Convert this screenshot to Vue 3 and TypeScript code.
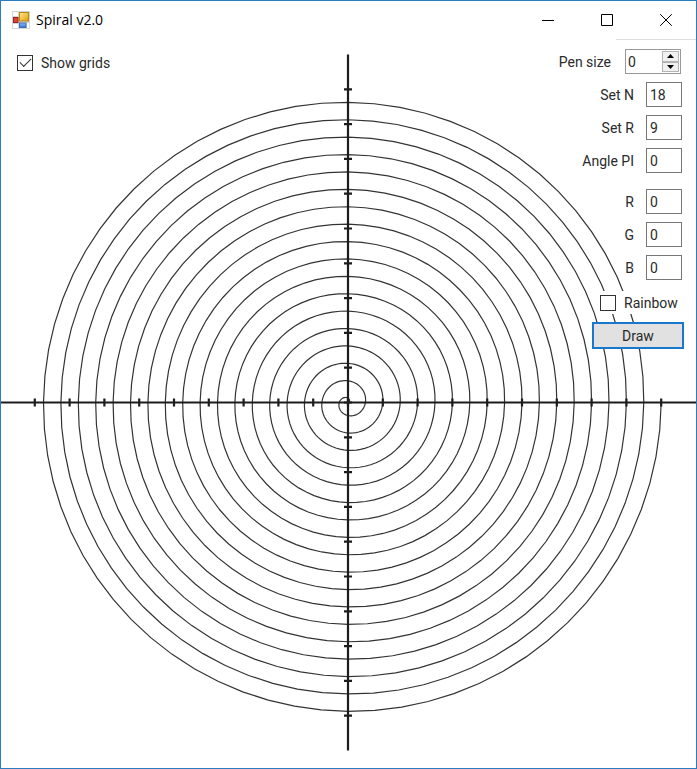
<script setup lang="ts">
import { computed, reactive, ref } from 'vue'

interface SpiralSettings {
  penSize: number
  n: number
  r: number
  anglePi: number
  red: number
  green: number
  blue: number
  rainbow: boolean
}

type NumericKey = Exclude<keyof SpiralSettings, 'rainbow'>

interface Field {
  key: NumericKey
  label: string
}

const UNIT = 34.8
const CENTER_X = 347
const CENTER_Y = 363.5
const STEPS_PER_TURN = 72

const showGrids = ref(true)

const form = reactive<SpiralSettings>({
  penSize: 0,
  n: 18,
  r: 9,
  anglePi: 0,
  red: 0,
  green: 0,
  blue: 0,
  rainbow: false,
})

const drawn = ref<SpiralSettings>({ ...form })

const shapeFields: Field[] = [
  { key: 'n', label: 'Set N' },
  { key: 'r', label: 'Set R' },
  { key: 'anglePi', label: 'Angle PI' },
]

const colorFields: Field[] = [
  { key: 'red', label: 'R' },
  { key: 'green', label: 'G' },
  { key: 'blue', label: 'B' },
]

const ticks = [-9, -8, -7, -6, -5, -4, -3, -2, -1, 0, 1, 2, 3, 4, 5, 6, 7, 8, 9]

const tickPath = ticks
  .map((t) => {
    const x = CENTER_X + t * UNIT
    const y = CENTER_Y + t * UNIT
    return `M${x} ${CENTER_Y - 4}v8M${CENTER_X - 4} ${y}h8`
  })
  .join('')

const axisPath = `M0 ${CENTER_Y}H695M${CENTER_X} ${CENTER_Y - 10 * UNIT}V${CENTER_Y + 10 * UNIT}`

// Archimedean spiral: N turns, growing evenly to a radius of R grid units.
const turns = computed<string[]>(() => {
  const { n, r, anglePi } = drawn.value
  const count = Math.min(Math.max(Math.round(n), 0), 200)
  const result: string[] = []
  for (let turn = 0; turn < count; turn++) {
    const points: string[] = []
    for (let s = 0; s <= STEPS_PER_TURN; s++) {
      const t = turn + s / STEPS_PER_TURN
      const radius = (t / count) * r * UNIT
      const angle = t * 2 * Math.PI + anglePi * Math.PI
      const x = CENTER_X + radius * Math.cos(angle)
      const y = CENTER_Y - radius * Math.sin(angle)
      points.push(`${x.toFixed(2)} ${y.toFixed(2)}`)
    }
    result.push('M' + points.join('L'))
  }
  return result
})

function strokeOf(index: number): string {
  const s = drawn.value
  return s.rainbow
    ? `hsl(${(index * 360) / turns.value.length}, 90%, 45%)`
    : `rgb(${s.red}, ${s.green}, ${s.blue})`
}

function stepPen(delta: number): void {
  form.penSize = Math.max(0, form.penSize + delta)
}

function draw(): void {
  drawn.value = { ...form }
}
</script>

<template>
  <div class="window">
    <header class="titlebar">
      <svg class="app-icon" viewBox="0 0 18 18" aria-hidden="true">
        <defs>
          <linearGradient id="gold" x1="0" y1="0" x2="1" y2="1">
            <stop offset="0" stop-color="#ffe893" />
            <stop offset="1" stop-color="#e0a000" />
          </linearGradient>
          <linearGradient id="sky" x1="0" y1="0" x2="0" y2="1">
            <stop offset="0" stop-color="#8fc0ff" />
            <stop offset="1" stop-color="#2c6fd6" />
          </linearGradient>
        </defs>
        <rect width="18" height="18" rx="1" fill="#d4d4d4" />
        <path d="M1 1h5v4H1zM1 13h5v4H1zM15 12h2v5h-2z" fill="#fff" />
        <rect x="7.5" y="1.5" width="9" height="8.5" fill="url(#gold)" stroke="#b98512" />
        <rect x="1.5" y="6.5" width="4.500" height="5" fill="#d9443a" stroke="#a51d1d" />
        <rect x="7.5" y="12" width="6.5" height="4.500" fill="url(#sky)" stroke="#3f6fb8" />
      </svg>
      <h1 class="title">Spiral v2.0</h1>
      <div class="caption-buttons">
        <button type="button" aria-label="Minimize">
          <svg viewBox="0 0 12 12"><path d="M0 6.5h12" /></svg>
        </button>
        <button type="button" aria-label="Maximize">
          <svg viewBox="0 0 12 12"><path d="M.5.5h11v11H.5z" /></svg>
        </button>
        <button type="button" aria-label="Close">
          <svg viewBox="0 0 12 12"><path d="M.2.2l11.6 11.6M11.8.2L.2 11.8" /></svg>
        </button>
      </div>
    </header>

    <main class="client">
      <svg class="plot" viewBox="0 0 695 728" aria-hidden="true">
        <path
          v-for="(d, i) in turns"
          :key="i"
          class="spiral"
          :d="d"
          :stroke="strokeOf(i)"
          :stroke-width="Math.max(1.2, drawn.penSize)"
        />
        <g v-if="showGrids" class="grid">
          <path :d="axisPath" />
          <path :d="tickPath" />
        </g>
      </svg>

      <form class="controls" @submit.prevent="draw">
        <label class="check grids">
          <input v-model="showGrids" type="checkbox" />
          <span>Show grids</span>
        </label>

        <div class="panel">
          <div class="group">
            <div class="row pen">
              <label for="pen">Pen size</label>
              <div class="spinner">
                <input id="pen" v-model.number="form.penSize" type="text" inputmode="numeric" />
                <div class="arrows">
                  <button type="button" aria-label="Increase pen size" @click="stepPen(1)">
                    <svg viewBox="0 0 7 4"><path d="M0 4l3.5-4L7 4z" /></svg>
                  </button>
                  <button type="button" aria-label="Decrease pen size" @click="stepPen(-1)">
                    <svg viewBox="0 0 7 4"><path d="M0 0l3.5 4L7 0z" /></svg>
                  </button>
                </div>
              </div>
            </div>
            <div v-for="f in shapeFields" :key="f.key" class="row">
              <label :for="f.key">{{ f.label }}</label>
              <input :id="f.key" v-model.number="form[f.key]" class="box" type="text" />
            </div>
          </div>
          <div class="group">
            <div v-for="f in colorFields" :key="f.key" class="row">
              <label :for="f.key">{{ f.label }}</label>
              <input :id="f.key" v-model.number="form[f.key]" class="box" type="text" />
            </div>
          </div>
          <div class="actions">
            <label class="check">
              <input v-model="form.rainbow" type="checkbox" />
              <span>Rainbow</span>
            </label>
            <button class="draw" type="submit">Draw</button>
          </div>
        </div>
      </form>
    </main>
  </div>
</template>

<style>
body {
  margin: 0;
  background: #fff;
}
</style>

<style scoped>
.window {
  box-sizing: border-box;
  min-height: 100vh;
  border: 1px solid #2b7cc0;
  background: #fff;
  color: #2a2a2a;
  font: 14px/20px Roboto, "Liberation Sans", sans-serif;
}

.titlebar {
  display: flex;
  align-items: center;
  height: 38px;
  padding: 0 1px 0 11px;
}

.app-icon {
  width: 18px;
  height: 18px;
}

.title {
  flex: 1;
  margin: 0 0 0 6px;
  color: #000;
  font: 14px/20px "Open Sans", "Noto Sans", sans-serif;
}

.caption-buttons {
  display: flex;
  align-self: stretch;
}

.caption-buttons button {
  display: grid;
  place-items: center;
  width: 59px;
  padding: 0;
  border: 0;
  background: none;
}

.caption-buttons svg {
  width: 12px;
  height: 12px;
  fill: none;
  stroke: #000;
}

.client {
  display: grid;
}

.plot,
.controls {
  grid-area: 1 / 1;
}

.plot {
  display: block;
  width: 100%;
}

.spiral {
  fill: none;
  stroke-opacity: 0.8;
}

.grid {
  fill: none;
  stroke: #1c1c1c;
  stroke-width: 2.2;
}

.controls {
  display: flex;
  justify-content: space-between;
  align-items: flex-start;
}

.check {
  display: flex;
  align-items: center;
  gap: 8px;
}

.check input {
  display: grid;
  place-items: center;
  width: 16px;
  height: 16px;
  margin: 0;
  appearance: none;
  border: 1px solid #333;
  background: #fff;
}

.check input:checked::after {
  width: 10px;
  height: 5px;
  margin-bottom: 4px;
  border: solid #333;
  border-width: 0 0 1px 1px;
  content: "";
  transform: rotate(-45deg);
}

.grids {
  margin: 14px 0 0 16px;
}

.panel {
  display: flex;
  flex-direction: column;
  align-items: flex-end;
  gap: 16px;
  width: 80px;
  padding: 9px 0 0;
  border-top: 1px solid #dcdfe0;
}

.group {
  display: flex;
  flex-direction: column;
  align-items: flex-end;
  gap: 8px;
  padding-right: 14px;
}

.row {
  display: flex;
  align-items: center;
  gap: 12px;
  white-space: nowrap;
}

.pen {
  gap: 14px;
  padding-right: 1px;
}

.box,
.spinner {
  box-sizing: border-box;
  height: 25px;
  border: 1px solid #777;
  background: #fff;
}

.box,
.spinner input {
  padding: 0 0 0 3px;
  color: #2a2a2a;
  font: inherit;
}

.box {
  width: 36px;
}

.spinner {
  display: flex;
  width: 56px;
  padding: 1px;
  border-color: #999;
}

.spinner input {
  flex: 1;
  min-width: 0;
  padding-left: 1px;
  border: 0;
  outline: 0;
  background: none;
}

.arrows {
  display: grid;
  grid-template-rows: 1fr 1fr;
  width: 17px;
}

.arrows button {
  display: grid;
  place-items: center;
  padding: 0;
  border: 1px solid #b4b4b4;
  background: #f0f0f0;
}

.arrows svg {
  width: 7px;
  height: 4px;
}

.actions {
  display: flex;
  flex-direction: column;
  width: 92px;
  margin-top: -5px;
  padding-right: 12px;
}

.actions .check {
  height: 23px;
  margin-left: 8px;
  background: #fff;
}

.draw {
  height: 27px;
  margin-top: 8px;
  border: 2px solid #1878cf;
  background: #e1e1e1;
  color: #2a2a2a;
  font: inherit;
}
</style>
